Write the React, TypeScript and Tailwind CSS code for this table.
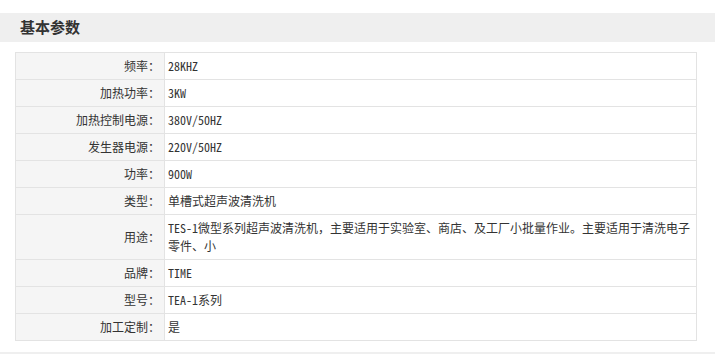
const rows: [string, string, boolean?][] = [
  ["频率", "28KHZ"],
  ["加热功率", "3KW"],
  ["加热控制电源", "380V/50HZ"],
  ["发生器电源", "220V/50HZ"],
  ["功率", "900W"],
  ["类型", "单槽式超声波清洗机"],
  [
    "用途",
    "TES-1微型系列超声波清洗机，主要适用于实验室、商店、及工厂小批量作业。主要适用于清洗电子零件、小",
    true,
  ],
  ["品牌", "TIME"],
  ["型号", "TEA-1系列"],
  ["加工定制", "是"],
];

export default function App() {
  return (
    <div
      className="w-[715px] h-[354px] bg-white text-[#333] overflow-hidden"
      style={{ fontFamily: '"Noto Sans Mono CJK SC", "Noto Sans CJK SC", monospace' }}
    >
      <div className="h-[13px]" />
      <div className="h-[29px] bg-[#efefef] flex items-center pl-[20px]">
        <span className="text-[15px] font-bold">基本参数</span>
      </div>
      <div className="pt-[10px] pl-[15px] pr-[18px]">
        <table className="w-full border-collapse text-[12px]">
          <tbody>
            {rows.map(([label, value, tall], i) => (
              <tr key={i} className={tall ? "h-[45px]" : "h-[27px]"}>
                <td className="w-[149px] bg-[#f5f5f5] border border-[#e3e3e3] text-right pr-[4px] align-middle">
                  {label}：
                </td>
                <td className="border border-[#e3e3e3] pl-[3px] pr-[4px] align-middle leading-[18px]">
                  {value}
                </td>
              </tr>
            ))}
          </tbody>
        </table>
      </div>
      <div className="mt-[11px] h-[10px] bg-[#efefef]" />
    </div>
  );
}
